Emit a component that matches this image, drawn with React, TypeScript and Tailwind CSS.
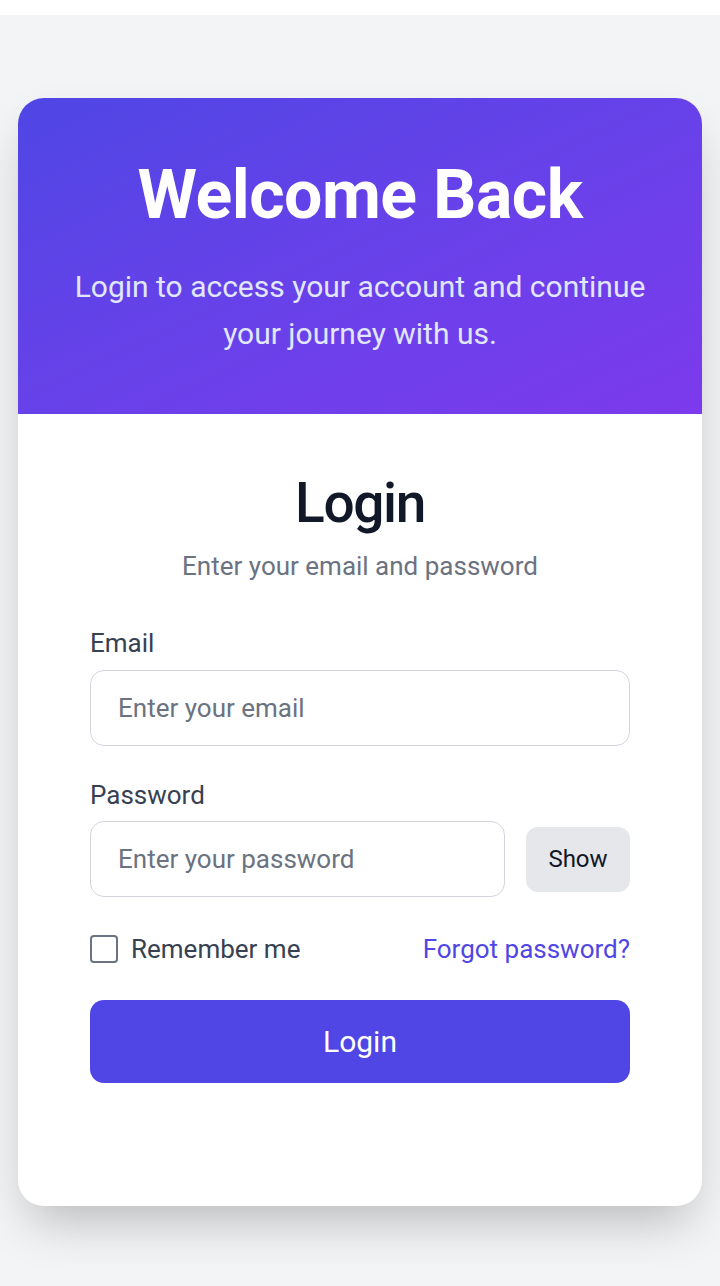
import React from "react";

export default function App() {
  return (
    <div className="min-h-screen bg-white pt-[15px]" style={{ fontFamily: "Roboto, 'Noto Sans', sans-serif" }}>
      <div className="bg-[#f3f4f6] px-[18px] pt-[83px] pb-[81px]">
        <div className="overflow-hidden rounded-[26px] bg-white shadow-2xl">
          <div className="bg-linear-to-br from-[#4f46e5] to-[#7c3aed] px-[40px] pt-[61px] pb-[57px] text-center">
            <h1 className="text-[68px] font-bold leading-[72px] tracking-[-0.5px] text-white">Welcome Back</h1>
            <p className="mt-[32px] text-[30px] leading-[47px] text-[#e0e7ff]">
              Login to access your account and continue your journey with us.
            </p>
          </div>
          <div className="px-[72px] pt-[61px] pb-[123px]">
            <h2 className="text-center text-[55px] font-medium leading-[56px] tracking-tight text-[#111827]">Login</h2>
            <p className="mt-[19px] text-center text-[26px] leading-[32px] text-[#6b7280]">
              Enter your email and password
            </p>
            <div className="mt-[45px]">
              <label className="block text-[26px] leading-[32px] text-[#374151]">Email</label>
              <input
                type="email"
                placeholder="Enter your email"
                className="mt-[11px] block h-[76px] w-full rounded-[14px] border border-[#d1d5db] px-[27px] text-[26px] text-[#111827] placeholder:text-[#6b7280] outline-none"
              />
            </div>
            <div className="mt-[33px]">
              <label className="block text-[26px] leading-[32px] text-[#374151]">Password</label>
              <div className="mt-[10px] flex items-center gap-[21px]">
                <input
                  type="password"
                  placeholder="Enter your password"
                  className="block h-[76px] min-w-0 flex-1 rounded-[14px] border border-[#d1d5db] px-[27px] text-[26px] text-[#111827] placeholder:text-[#6b7280] outline-none"
                />
                <button className="h-[65px] w-[104px] rounded-[12px] bg-[#e5e7eb] text-[24px] text-[#111827]">
                  Show
                </button>
              </div>
            </div>
            <div className="mt-[36px] flex items-center justify-between">
              <label className="flex items-center gap-[13px] text-[26px] leading-[32px] text-[#374151]">
                <span className="block h-[28px] w-[28px] rounded-[4px] border-2 border-[#6b7280] bg-white" />
                Remember me
              </label>
              <a className="text-[26px] leading-[32px] text-[#4f46e5]">Forgot password?</a>
            </div>
            <button className="mt-[35px] flex h-[83px] w-full items-center justify-center rounded-[14px] bg-[#4f46e5] text-[30px] text-white">
              Login
            </button>
          </div>
        </div>
      </div>
    </div>
  );
}
